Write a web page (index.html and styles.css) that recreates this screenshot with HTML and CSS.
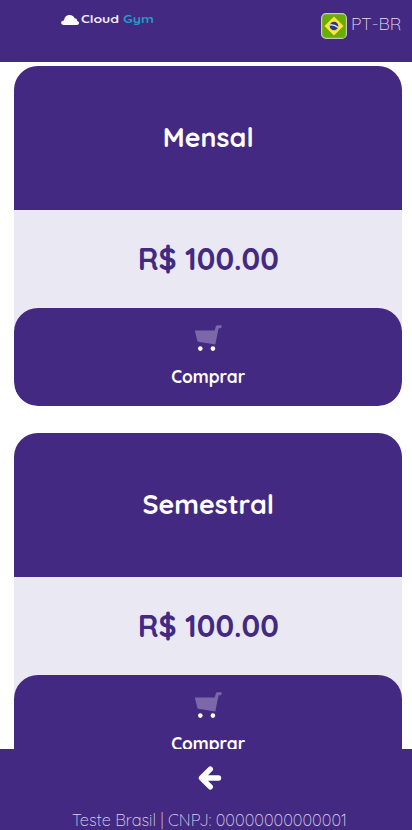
FILE: index.html
```html
<!DOCTYPE html>
<html lang="pt-BR">
<head>
<meta charset="utf-8">
<meta name="viewport" content="width=device-width, initial-scale=1">
<title>Cloud Gym</title>
<link rel="stylesheet" href="styles.css">
</head>
<body>
<div class="app">
  <header class="topbar">
    <div class="logo">
      <svg class="cloud" viewBox="0 0 18 10" preserveAspectRatio="none"><path d="M3 10C-1 10-.8 5.700 3 5.400 3.500 1.300 6-.2 8.800 0c2.300.1 3.900 1.200 4.700 3.200 2 .2 2.700 1.300 2.600 2.600C19 7 18.500 10 15.500 10Z" fill="#fff"/></svg>
      <span class="wordmark">Cloud <span class="gym">Gym</span></span>
    </div>
    <div class="language">
      <svg class="flag" viewBox="0 0 26 26"><rect x=".6" y=".6" width="24.800" height="24.800" rx="4.500" fill="#69ad00" stroke="#c5cbb9" stroke-width="1.200"/><path d="M13 3.500 22.500 13 13 22.500 3.500 13Z" fill="#ffe347"/><circle cx="13" cy="13" r="4.300" fill="#263c84"/><path d="M9 12q4.500-1 8 2.500" fill="none" stroke="#e8edf4" stroke-width="1.300"/></svg>
      <span class="code">PT-BR</span>
    </div>
  </header>
  <main class="plans">
    <section class="plan">
      <h2 class="name">Mensal</h2>
      <div class="price">R$ 100.00</div>
      <div class="buy">
        <svg class="cart" viewBox="0 0 28 28"><path d="M.8 5.500H20.700L21.800 1.600Q22.200.3 23.500.3H26.500Q27.800.3 27.800 1.600T26.500 3.200H24.600L21.300 19.600 4.300 16.800Q3.500 16.600 3.300 15.800Z" fill="#7c68a8"/><circle cx="6.300" cy="23.600" r="2.300" fill="#fff"/><circle cx="18.900" cy="23.600" r="2.300" fill="#fff"/></svg>
        <span class="label">Comprar</span>
      </div>
    </section>
    <section class="plan">
      <h2 class="name">Semestral</h2>
      <div class="price">R$ 100.00</div>
      <div class="buy">
        <svg class="cart" viewBox="0 0 28 28"><path d="M.8 5.500H20.700L21.800 1.600Q22.200.3 23.500.3H26.500Q27.800.3 27.800 1.600T26.500 3.200H24.600L21.300 19.600 4.300 16.800Q3.500 16.600 3.300 15.800Z" fill="#7c68a8"/><circle cx="6.300" cy="23.600" r="2.300" fill="#fff"/><circle cx="18.900" cy="23.600" r="2.300" fill="#fff"/></svg>
        <span class="label">Comprar</span>
      </div>
    </section>
  </main>
  <footer class="bottom">
    <svg class="back" viewBox="0 0 24 24"><path d="M12.300 3.200 3.500 12l8.800 8.800M4.500 12H20.500" fill="none" stroke="#fff" stroke-width="5.400" stroke-linecap="round" stroke-linejoin="round"/></svg>
    <span class="company">Teste Brasil | CNPJ: 00000000000001</span>
  </footer>
</div>
</body>
</html>
```
FILE: styles.css
```css
* { box-sizing: border-box; }
body { margin: 0; background: #fff; font-family: Quicksand, Lato, sans-serif; }
.app { height: 830px; display: flex; flex-direction: column; overflow: hidden; }
.topbar { height: 61.500px; flex: none; background: #432982; display: flex; justify-content: space-between; align-items: flex-start; padding: 12px 10px 0 61px; }
.logo { display: flex; align-items: center; gap: 2px; height: 15px; }
.cloud { width: 18px; height: 10px; }
.wordmark { font-size: 11px; line-height: 15px; font-weight: 700; color: #f1edf7; white-space: nowrap; transform: scaleX(1.270); transform-origin: left; }
.gym { color: #239bc3; }
.language { display: flex; align-items: center; gap: 4px; height: 26px; margin-top: 1px; }
.flag { width: 26px; height: 26px; }
.code { width: 51px; font-size: 17.400px; line-height: 20px; font-weight: 300; color: #e5deef; white-space: nowrap; margin-top: -4px; }
.plans { flex: 1; min-height: 0; overflow: hidden; padding: 4px 10px 0 14.400px; }
.plan { height: 340.500px; margin-bottom: 26.500px; background: #eae8f2; border-radius: 24px; display: flex; flex-direction: column; overflow: hidden; }
.name { margin: 0; height: 144.500px; padding-bottom: 2px; background: #432982; color: #fff; display: flex; align-items: center; justify-content: center; font-size: 26.800px; font-weight: 700; }
.price { height: 98px; display: flex; align-items: center; justify-content: center; color: #432982; font-size: 30.300px; font-weight: 700; }
.buy { height: 98px; flex: none; background: #432982; border-radius: 24px; display: flex; flex-direction: column; align-items: center; padding-top: 17px; color: #fff; }
.cart { width: 28px; height: 28px; }
.label { font-size: 17.300px; line-height: 24px; font-weight: 700; margin-top: 12px; }
.bottom { height: 81px; flex: none; background: #432982; display: flex; flex-direction: column; align-items: center; padding-top: 17px; }
.back { width: 24px; height: 24px; margin-left: 8px; }
.company { font-size: 16.400px; line-height: 20px; margin-top: 20px; margin-left: 7px; color: #ded6ea; font-weight: 300; white-space: nowrap; }
```
